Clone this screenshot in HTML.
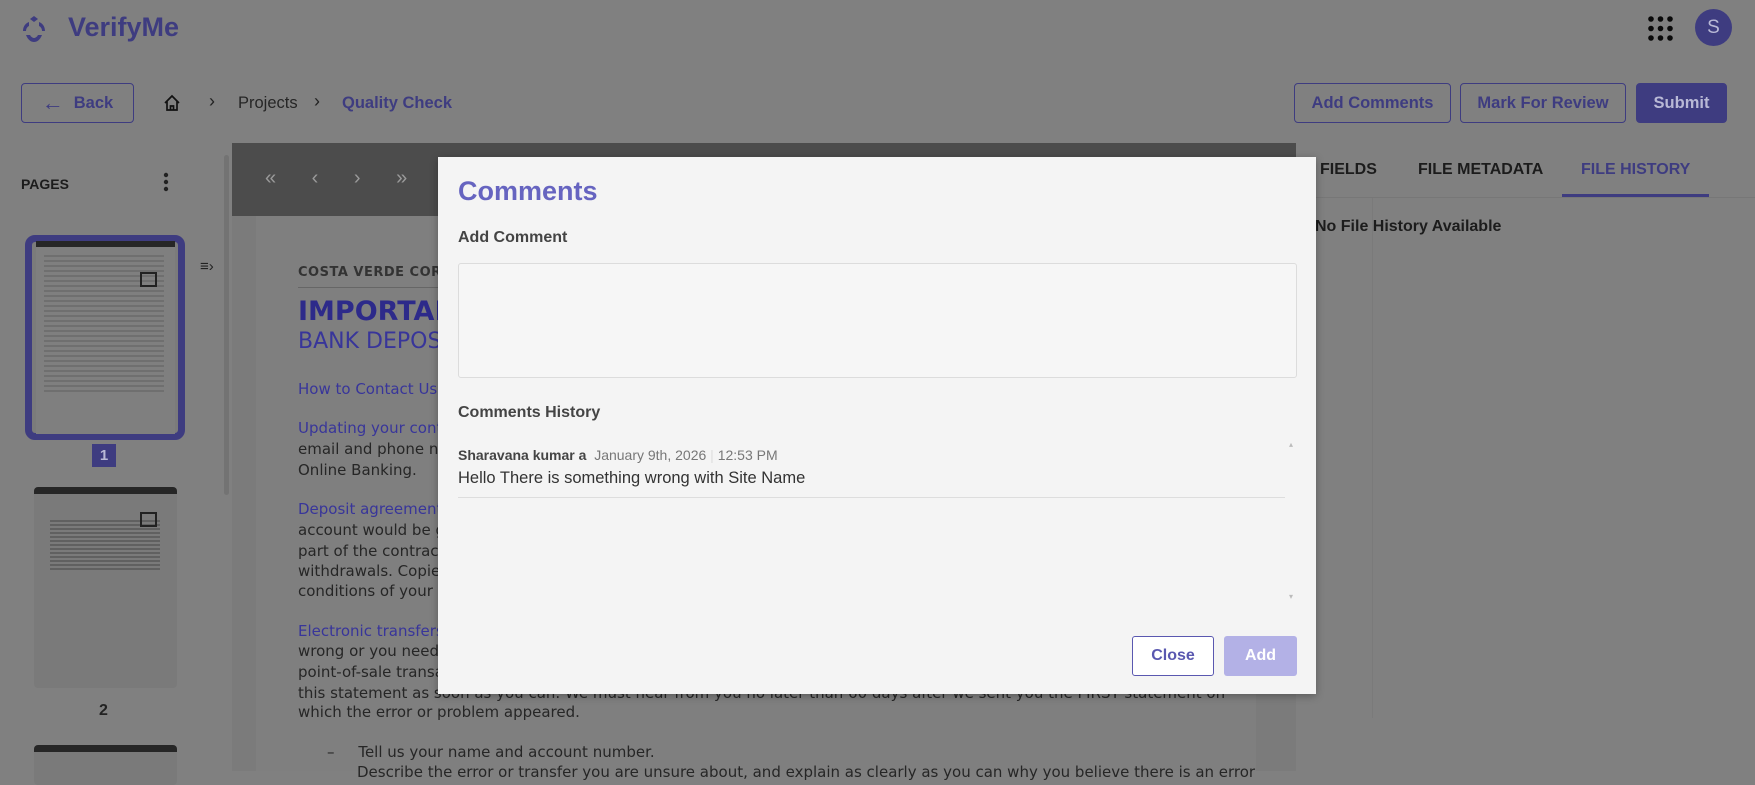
<!DOCTYPE html>
<html><head><meta charset="utf-8"><style>
*{box-sizing:border-box;margin:0;padding:0}
body{width:1755px;height:771px;overflow:hidden;background:#808080;font-family:"Liberation Sans",Arial,sans-serif;position:relative;color:#1c1c1c}
.a{position:absolute;white-space:nowrap}
.btn{position:absolute;border:1.5px solid #3e3c80;border-radius:4px;color:#3e3c80;font-weight:bold;font-size:16.5px;display:flex;align-items:center;justify-content:center}
.doc{position:absolute;left:298px;font-family:"DejaVu Sans",sans-serif;font-size:15px;color:#262626;white-space:nowrap}
.pu{color:#38359a}
</style></head><body>
<!-- header -->
<svg class="a" style="left:19px;top:15px" width="30" height="30" viewBox="0 0 30 30"><path d="M11 4 L15 1 L19 4 L15 7Z" fill="#3e3c80"/><path d="M4 16 C4 11 7 8 10 7 L10 11 C8 12 7 14 7 16Z M26 16 C26 11 23 8 20 7 L20 11 C22 12 23 14 23 16Z M7 20 C9 25 12 27 15 27 C18 27 21 25 23 20 L19 20 C18 22 16 23 15 23 C14 23 12 22 11 20Z" fill="#3e3c80"/></svg>
<div class="a" style="left:68px;top:12px;font-size:27px;font-weight:bold;color:#3e3c80">VerifyMe</div>
<svg class="a" style="left:1648px;top:16px" width="25" height="25"><g fill="#0a0a0a"><circle cx="3" cy="3" r="2.8"/><circle cx="12.5" cy="3" r="2.8"/><circle cx="22" cy="3" r="2.8"/><circle cx="3" cy="12.5" r="2.8"/><circle cx="12.5" cy="12.5" r="2.8"/><circle cx="22" cy="12.5" r="2.8"/><circle cx="3" cy="22" r="2.8"/><circle cx="12.5" cy="22" r="2.8"/><circle cx="22" cy="22" r="2.8"/></g></svg>
<div class="a" style="left:1695px;top:9px;width:37px;height:37px;border-radius:50%;background:#3e3c80;color:#b9b9d6;font-size:19px;display:flex;align-items:center;justify-content:center">S</div>

<div class="btn" style="left:21px;top:83px;width:113px;height:40px"><span style="font-size:22px;font-weight:normal;margin-right:10px;line-height:1">&#8592;</span>Back</div>
<svg class="a" style="left:163px;top:94px" width="18" height="18" viewBox="0 0 18 18"><path d="M2 9 L9 2 L16 9 M4 7 V16 H14 V7 M7.5 16 V12 H10.5 V16" fill="none" stroke="#111" stroke-width="1.7"/></svg>
<div class="a" style="left:209px;top:91px;font-size:18px;color:#222">&#8250;</div>
<div class="a" style="left:238px;top:94px;font-size:16.5px;color:#262626">Projects</div>
<div class="a" style="left:314px;top:91px;font-size:18px;color:#222">&#8250;</div>
<div class="a" style="left:342px;top:94px;font-size:16.5px;font-weight:bold;color:#3e3c80">Quality Check</div>

<div class="btn" style="left:1294px;top:83px;width:157px;height:40px">Add Comments</div>
<div class="btn" style="left:1460px;top:83px;width:166px;height:40px">Mark For Review</div>
<div class="btn" style="left:1636px;top:83px;width:91px;height:40px;background:#3e3c80;color:#b9b9d6">Submit</div>

<!-- sidebar -->
<div class="a" style="left:21px;top:176px;font-size:14px;font-weight:bold;color:#1c1c1c">PAGES</div>
<svg class="a" style="left:162px;top:172px" width="8" height="22"><circle cx="4" cy="3" r="2.2" fill="#222"/><circle cx="4" cy="10" r="2.2" fill="#222"/><circle cx="4" cy="17" r="2.2" fill="#222"/></svg>
<div class="a" style="left:25px;top:235px;width:160px;height:205px;border:7px solid #3e3c80;border-radius:10px;background:#7b7b7b"></div>
<div class="a" style="left:36px;top:241px;width:139px;height:193px;background:#7f7f7f;border-top:6px solid #262626"></div>
<div class="a" style="left:44px;top:255px;width:120px;height:140px;background:repeating-linear-gradient(#6b6b6b 0 2px,#7f7f7f 2px 5px);opacity:.8"></div>
<div class="a" style="left:140px;top:272px;width:17px;height:15px;border:2px solid #222"></div>
<div class="a" style="left:92px;top:444px;width:24px;height:23px;background:#3e3c80;color:#b9b9d6;font-weight:bold;font-size:15px;display:flex;align-items:center;justify-content:center">1</div>
<div class="a" style="left:34px;top:487px;width:143px;height:201px;background:#7a7a7a;border-top:7px solid #262626;border-radius:4px"></div>
<div class="a" style="left:50px;top:520px;width:110px;height:50px;background:repeating-linear-gradient(#555 0 2px,#7a7a7a 2px 4px);opacity:.7"></div>
<div class="a" style="left:140px;top:512px;width:17px;height:15px;border:2px solid #222"></div>
<div class="a" style="left:99px;top:702px;font-size:16px;font-weight:bold;color:#222">2</div>
<div class="a" style="left:34px;top:745px;width:143px;height:40px;background:#7a7a7a;border-top:7px solid #262626;border-radius:4px"></div>
<div class="a" style="left:224px;top:155px;width:5px;height:340px;background:#737373;border-radius:3px"></div>
<div class="a" style="left:200px;top:258px;font-size:15px;color:#222">&#8801;&#8250;</div>

<!-- viewer -->
<div class="a" style="left:232px;top:143px;width:1064px;height:628px;background:#7b7b7b"></div>
<div class="a" style="left:232px;top:143px;width:1064px;height:73px;background:#4c4c4c"></div>
<div class="a" style="left:265px;top:167px;width:450px;color:#9a9a9a;font-size:20px;word-spacing:30px">« ‹ › »</div>
<div class="a" style="left:256px;top:216px;width:1000px;height:555px;background:#7f7f7f"></div>
<div class="doc" style="top:265px;font-size:13px;font-weight:bold;color:#333;letter-spacing:.5px">COSTA VERDE CORP &nbsp;|</div>
<div class="a" style="left:298px;top:287px;width:140px;border-top:1px solid #666"></div>
<div class="doc pu" style="top:296px;font-size:27px;font-weight:bold;color:#2d2a8a">IMPORTANT NOTICE</div>
<div class="doc pu" style="top:329px;font-size:22px">BANK DEPOSIT ACCOUNTS</div>
<div class="doc pu" style="top:380px">How to Contact Us - call us</div>
<div class="doc pu" style="top:419px">Updating your contact information</div>
<div class="doc" style="top:440px">email and phone number</div>
<div class="doc" style="top:461px">Online Banking.</div>
<div class="doc pu" style="top:500px">Deposit agreement -</div>
<div class="doc" style="top:521px">account would be governed</div>
<div class="doc" style="top:542px">part of the contract</div>
<div class="doc" style="top:562px">withdrawals. Copies</div>
<div class="doc" style="top:582px">conditions of your account</div>
<div class="doc pu" style="top:622px">Electronic transfers:</div>
<div class="doc" style="top:642px">wrong or you need more</div>
<div class="doc" style="top:663px">point-of-sale transactions</div>
<div class="doc" style="top:684px">this statement as soon as you can. We must hear from you no later than 60 days after we sent you the FIRST statement on</div>
<div class="doc" style="top:703px">which the error or problem appeared.</div>
<div class="doc" style="top:743px;left:327px">–&nbsp;&nbsp;&nbsp;&nbsp;&nbsp;Tell us your name and account number.</div>
<div class="doc" style="top:763px;left:357px">Describe the error or transfer you are unsure about, and explain as clearly as you can why you believe there is an error</div>

<!-- right panel -->
<div class="a" style="left:1296px;top:143px;width:459px;height:628px;background:#808080"></div>
<div class="a" style="left:1320px;top:161px;font-size:16px;font-weight:bold;color:#1c1c1c">FIELDS</div>
<div class="a" style="left:1418px;top:161px;font-size:16px;font-weight:bold;color:#1c1c1c">FILE METADATA</div>
<div class="a" style="left:1581px;top:161px;font-size:16px;font-weight:bold;color:#3e3c80">FILE HISTORY</div>
<div class="a" style="left:1296px;top:197px;width:459px;border-top:1px solid #777"></div>
<div class="a" style="left:1562px;top:194px;width:147px;height:3px;background:#3e3c80"></div>
<div class="a" style="left:1315px;top:218px;font-size:16px;font-weight:bold;color:#1c1c1c">No File History Available</div>
<div class="a" style="left:1372px;top:198px;width:1px;height:520px;background:#7a7a7a"></div>

<!-- modal -->
<div class="a" style="left:438px;top:157px;width:878px;height:537px;background:#f4f4f4;box-shadow:0 2px 8px rgba(0,0,0,.3)"></div>
<div class="a" style="left:458px;top:176px;font-size:27px;font-weight:bold;color:#6664c0">Comments</div>
<div class="a" style="left:458px;top:229px;font-size:16px;font-weight:bold;color:#444">Add Comment</div>
<div class="a" style="left:458px;top:263px;width:839px;height:115px;border:1px solid #dcdcdc;border-radius:3px;background:#f6f6f6"></div>
<div class="a" style="left:458px;top:404px;font-size:16px;font-weight:bold;color:#444">Comments History</div>
<div class="a" style="left:458px;top:447px;font-size:14px;color:#555"><b style="color:#444">Sharavana kumar a</b>&nbsp; <span style="color:#777">January 9th, 2026</span> <span style="color:#ddd">|</span> <span style="color:#777">12:53 PM</span></div>
<div class="a" style="left:458px;top:469px;font-size:16.5px;color:#333">Hello There is something wrong with Site Name</div>
<div class="a" style="left:458px;top:497px;width:827px;border-top:1px solid #ddd"></div>
<div class="a" style="left:1289px;top:440px;font-size:8px;color:#bbb">▴</div>
<div class="a" style="left:1289px;top:592px;font-size:8px;color:#bbb">▾</div>
<div class="a" style="left:1132px;top:636px;width:82px;height:40px;border:1.5px solid #5a58b0;border-radius:3px;color:#5a58b0;font-weight:bold;font-size:16px;display:flex;align-items:center;justify-content:center;background:#fff">Close</div>
<div class="a" style="left:1224px;top:636px;width:73px;height:40px;border-radius:3px;background:#b3b1e6;color:#fff;font-weight:bold;font-size:16px;display:flex;align-items:center;justify-content:center">Add</div>
</body></html>
